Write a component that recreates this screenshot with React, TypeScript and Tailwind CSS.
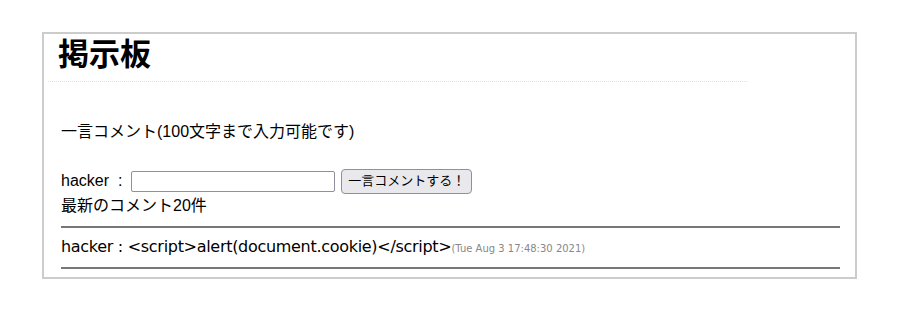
export default function App() {
  const jp = "font-['Liberation_Sans','Noto_Sans_CJK_JP',sans-serif]";
  return (
    <div className={`w-[900px] h-[310px] bg-white pt-[32px] pl-[42px] ${jp} text-black`}>
      <div className="w-[815px] h-[247px] border-2 border-[#cccccc] bg-white">
        <div className="ml-[4px] w-[699px] h-[48px] pl-[10px] border-b border-dotted border-[#e0dcf5]">
          <h1 className="text-[31px] leading-[40px] font-bold pt-[1px]">掲示板</h1>
        </div>
        <div className="pl-[17px] pr-[15px]">
          <p className="mt-[38px] text-[16px] leading-[24px]">一言コメント(100文字まで入力可能です)</p>
          <div className="mt-[24px] flex items-center h-[26px] text-[16px]">
            <span className="whitespace-pre">hacker  :</span>
            <input className="ml-[9px] w-[204px] h-[21px] border border-[#8f8f9d] rounded-[2px] bg-white" />
            <button className="ml-[6px] h-[25px] px-[6px] text-[13px] border border-[#8f8f9d] rounded-[4px] bg-[#e9e9ed]">
              一言コメントする！
            </button>
          </div>
          <p className="text-[16px] leading-[24px]">最新のコメント20件</p>
          <hr className="mt-[8px] border-t-2 border-[#777777]" />
          <div className="mt-[7px] h-[24px] leading-[24px] text-[16px] font-['DejaVu_Sans',sans-serif] tracking-[-0.3px]">
            hacker : &lt;script&gt;alert(document.cookie)&lt;/script&gt;
            <span className="text-[10px] text-[#888888] tracking-normal">(Tue Aug 3 17:48:30 2021)</span>
          </div>
          <hr className="mt-[8px] border-t-2 border-[#777777]" />
        </div>
      </div>
    </div>
  );
}
